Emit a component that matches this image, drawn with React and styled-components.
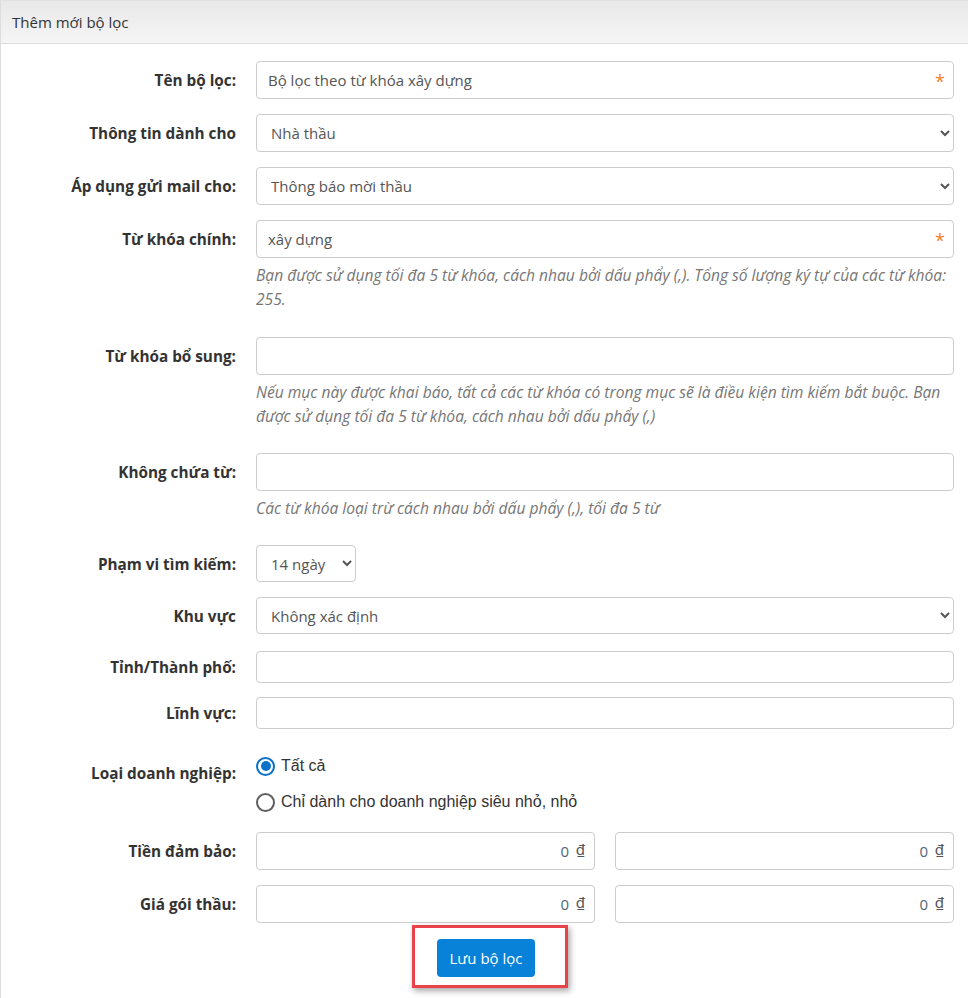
import React from 'react';
import styled, { createGlobalStyle } from 'styled-components';

const GlobalStyle = createGlobalStyle`
  html, body {
    margin: 0;
    padding: 0;
    background: #fff;
    overflow: hidden;
  }
  body {
    font-family: "Open Sans", "Noto Sans", sans-serif;
    font-size: 15px;
    color: #333;
  }
`;

const Panel = styled.div`
  width: 972px;
  height: 1010px;
  box-sizing: border-box;
  border: 1px solid #ddd;
  border-top-color: #e2e2e2;
`;

const PanelHeader = styled.div`
  height: 43px;
  box-sizing: border-box;
  padding: 0 11px;
  display: flex;
  align-items: center;
  background: linear-gradient(to bottom, #e8e8e8 0%, #f5f5f5 100%);
  border-bottom: 1px solid #dcdcdc;
  font-size: 15px;
  color: #333;
`;

const Form = styled.form`
  padding: 17px 0 0;
  display: flex;
  flex-direction: column;
`;

const Row = styled.div`
  display: grid;
  grid-template-columns: 235px 698px;
  column-gap: 20px;
  align-items: start;
  margin-bottom: ${p => p.$mb ?? 15}px;
`;

const Label = styled.label`
  height: ${p => p.$h ?? 38}px;
  padding-top: ${p => p.$pt ?? 0}px;
  box-sizing: border-box;
  display: flex;
  align-items: ${p => (p.$pt ? 'flex-start' : 'center')};
  justify-content: flex-end;
  font-weight: 700;
  font-size: 15.3px;
  line-height: 20px;
  color: #333;
  white-space: nowrap;
`;

const Field = styled.div`
  display: flex;
  flex-direction: column;
`;

const InputWrap = styled.div`
  position: relative;
  display: flex;
  height: ${p => p.$h ?? 38}px;
`;

const Input = styled.input`
  display: block;
  width: 100%;
  height: 100%;
  box-sizing: border-box;
  margin: 0;
  border: 1px solid #ccc;
  border-radius: 4px;
  padding: 0 ${p => (p.$right ? 25 : 11)}px 0 11px;
  font-family: "Open Sans", "Noto Sans", sans-serif;
  font-size: 15px;
  color: ${p => (p.$right ? '#4f6479' : '#555')};
  text-align: ${p => (p.$right ? 'right' : 'left')};
  outline: none;
  background: #fff;
`;

const Required = styled.span`
  position: absolute;
  right: 9px;
  top: 50%;
  transform: translateY(-42%);
  color: #f57f1f;
  font-size: 18px;
  line-height: 1;
`;

const Currency = styled.span`
  position: absolute;
  right: 10px;
  top: 50%;
  transform: translateY(-62%);
  color: #555;
  font-size: 15px;
  line-height: 1;
  font-family: "Noto Sans", "Open Sans", sans-serif;
`;

const Select = styled.select`
  display: block;
  width: ${p => p.$w || '100%'};
  height: ${p => p.$h ?? 38}px;
  box-sizing: border-box;
  margin: 0;
  border: 1px solid #ccc;
  border-radius: 4px;
  padding: 0 8px 0 10px;
  font-family: "Open Sans", "Noto Sans", sans-serif;
  font-size: 15px;
  color: #555;
  background: #fff;
  outline: none;
`;

const Help = styled.div`
  margin-top: 5px;
  font-style: italic;
  font-size: 15.6px;
  line-height: 24px;
  color: #767676;
`;

const RadioGroup = styled.div`
  display: flex;
  flex-direction: column;
  gap: 16px;
`;

const RadioLine = styled.label`
  display: flex;
  align-items: center;
  gap: 6px;
  height: 20px;
  font-family: "Liberation Sans", Arial, sans-serif;
  font-size: 16px;
  color: #333;
`;

const RadioDot = styled.span`
  width: 19px;
  height: 19px;
  box-sizing: border-box;
  border-radius: 50%;
  border: 2px solid ${p => (p.$on ? '#0b72c9' : '#5f5f5f')};
  display: flex;
  align-items: center;
  justify-content: center;
  &::after {
    content: '';
    width: 10px;
    height: 10px;
    border-radius: 50%;
    background: ${p => (p.$on ? '#0b72c9' : 'transparent')};
  }
`;

const Pair = styled.div`
  display: grid;
  grid-template-columns: 1fr 1fr;
  column-gap: 20px;
`;

const Actions = styled.div`
  display: flex;
  justify-content: center;
  padding-left: 8px;
`;

const Highlight = styled.div`
  border: 3px solid #e8434a;
  padding: 11px 30px 8px 22px;
  box-shadow: 2px 3px 6px rgba(0, 0, 0, 0.35);
`;

const Button = styled.button`
  display: block;
  height: 38px;
  width: 98px;
  padding: 0;
  border: none;
  border-radius: 4px;
  background: #0882d8;
  color: #fff;
  font-family: "Open Sans", "Noto Sans", sans-serif;
  font-size: 15px;
  cursor: pointer;
`;

const Text = ({ value, required, h }) => (
  <InputWrap $h={h}>
    <Input defaultValue={value} />
    {required && <Required>*</Required>}
  </InputWrap>
);

const Money = () => (
  <InputWrap>
    <Input defaultValue="0" $right />
    <Currency>₫</Currency>
  </InputWrap>
);

export default function App() {
  return (
    <>
      <GlobalStyle />
      <Panel>
        <PanelHeader>Thêm mới bộ lọc</PanelHeader>
        <Form onSubmit={e => e.preventDefault()}>
          <Row>
            <Label>Tên bộ lọc:</Label>
            <Text value="Bộ lọc theo từ khóa xây dựng" required />
          </Row>
          <Row>
            <Label>Thông tin dành cho</Label>
            <Select defaultValue="nt">
              <option value="nt">Nhà thầu</option>
            </Select>
          </Row>
          <Row>
            <Label>Áp dụng gửi mail cho:</Label>
            <Select defaultValue="tb">
              <option value="tb">Thông báo mời thầu</option>
            </Select>
          </Row>
          <Row $mb={26}>
            <Label>Từ khóa chính:</Label>
            <Field>
              <Text value="xây dựng" required />
              <Help>
                Bạn được sử dụng tối đa 5 từ khóa, cách nhau bởi dấu phẩy (,). Tổng số lượng ký tự của các từ khóa: 255.
              </Help>
            </Field>
          </Row>
          <Row $mb={25}>
            <Label>Từ khóa bổ sung:</Label>
            <Field>
              <Text value="" />
              <Help>
                Nếu mục này được khai báo, tất cả các từ khóa có trong mục sẽ là điều kiện tìm kiếm bắt buộc. Bạn được sử dụng tối đa 5 từ khóa, cách nhau bởi dấu phẩy (,)
              </Help>
            </Field>
          </Row>
          <Row $mb={25}>
            <Label>Không chứa từ:</Label>
            <Field>
              <Text value="" />
              <Help>Các từ khóa loại trừ cách nhau bởi dấu phẩy (,), tối đa 5 từ</Help>
            </Field>
          </Row>
          <Row>
            <Label $h={37}>Phạm vi tìm kiếm:</Label>
            <Select $w="100px" $h={37} defaultValue="14">
              <option value="14">14 ngày</option>
            </Select>
          </Row>
          <Row $mb={17}>
            <Label $h={37}>Khu vực</Label>
            <Select $h={37} defaultValue="kxd">
              <option value="kxd">Không xác định</option>
            </Select>
          </Row>
          <Row $mb={14}>
            <Label $h={32}>Tỉnh/Thành phố:</Label>
            <Text value="" h={32} />
          </Row>
          <Row $mb={27}>
            <Label $h={32}>Lĩnh vực:</Label>
            <Text value="" h={32} />
          </Row>
          <Row $mb={20}>
            <Label $h={38} $pt={7}>Loại doanh nghiệp:</Label>
            <RadioGroup>
              <RadioLine>
                <RadioDot $on />
                Tất cả
              </RadioLine>
              <RadioLine>
                <RadioDot />
                Chỉ dành cho doanh nghiệp siêu nhỏ, nhỏ
              </RadioLine>
            </RadioGroup>
          </Row>
          <Row>
            <Label>Tiền đảm bảo:</Label>
            <Pair>
              <Money />
              <Money />
            </Pair>
          </Row>
          <Row $mb={2}>
            <Label>Giá gói thầu:</Label>
            <Pair>
              <Money />
              <Money />
            </Pair>
          </Row>
          <Actions>
            <Highlight>
              <Button type="submit">Lưu bộ lọc</Button>
            </Highlight>
          </Actions>
        </Form>
      </Panel>
    </>
  );
}
